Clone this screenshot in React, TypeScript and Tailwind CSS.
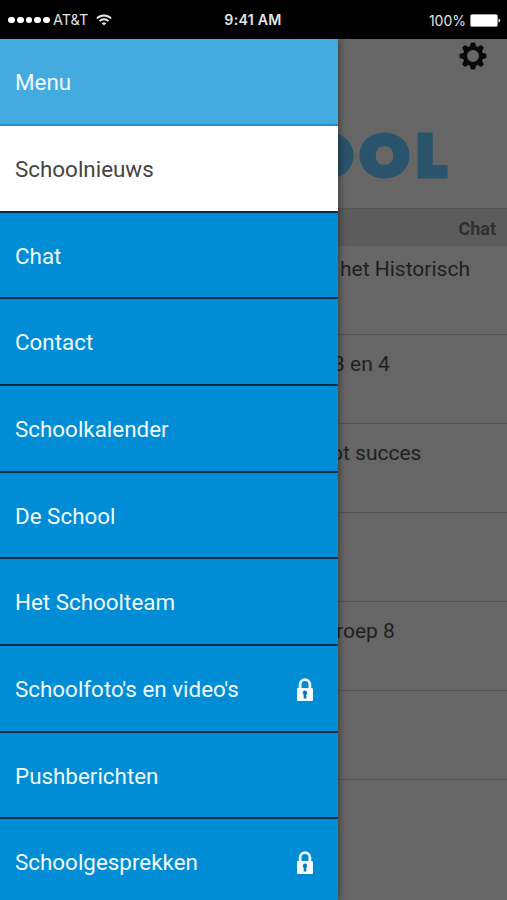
interface MenuItem {
  label: string;
  locked?: boolean;
  active?: boolean;
}

const menuItems: MenuItem[] = [
  { label: 'Schoolnieuws', active: true },
  { label: 'Chat' },
  { label: 'Contact' },
  { label: 'Schoolkalender' },
  { label: 'De School' },
  { label: 'Het Schoolteam' },
  { label: "Schoolfoto's en video's", locked: true },
  { label: 'Pushberichten' },
  { label: 'Schoolgesprekken', locked: true },
];

const newsRows = [
  { title: 'het Historisch', className: 'h-[89px] pl-[340px] pt-[7px] border-b' },
  { title: '3 en 4', className: 'h-[89px] pl-[333px] pt-[13px] border-b' },
  { title: 'ot succes', className: 'h-[89px] pl-[331px] pt-[13px] border-b' },
  { title: '', className: 'h-[89px] border-b' },
  { title: 'roep 8', className: 'h-[89px] pl-[336px] pt-[13px] border-b' },
  { title: '', className: 'h-[89px] border-b' },
  { title: '', className: 'h-[121px]' },
];

function WifiIcon() {
  return (
    <svg className="ml-[8px] h-[12px] w-[16px]" viewBox="0 0 16 12" fill="none" stroke="#e8e8e8">
      <path d="M0.9 4.4a10.2 10.2 0 0 1 14.2 0" strokeWidth="1.8" />
      <path d="M3.5 7.1a6.4 6.4 0 0 1 9 0" strokeWidth="1.8" />
      <path d="M8 11.6 5.7 9.3a3.3 3.3 0 0 1 4.6 0Z" fill="#e8e8e8" stroke="none" />
    </svg>
  );
}

function BatteryIcon() {
  return (
    <svg className="ml-[4px] h-[13px] w-[31px]" viewBox="0 0 31 13">
      <rect x="0.5" y="0.5" width="27" height="12" rx="1.5" fill="#fff" stroke="#bbb" strokeWidth="0.5" />
      <path d="M28.5 4.5q1.8 0.5 1.8 2t-1.8 2Z" fill="#ddd" />
    </svg>
  );
}

function GearIcon() {
  return (
    <svg className="h-[28px] w-[28px]" viewBox="-14 -14 28 28">
      <circle r="8" fill="none" stroke="#080808" strokeWidth="4" />
      {[0, 45, 90, 135, 180, 225, 270, 315].map((angle) => (
        <path key={angle} d="M-3.6 -8.5-2.3 -12.4q0.2-1.1 1.1-1.1h2.4q0.9 0 1.1 1.1L3.6 -8.5Z" fill="#080808" transform={`rotate(${angle})`} />
      ))}
    </svg>
  );
}

function LockIcon() {
  return (
    <svg className="h-[24px] w-[18px]" viewBox="0 0 18 24">
      <path d="M4.1 11V6.6a4.9 4.9 0 0 1 9.8 0V11" fill="none" stroke="#f6fbff" strokeWidth="2.8" />
      <rect x="1" y="10" width="16" height="13" rx="1.2" fill="#f6fbff" />
      <path d="M9 12.4a2.4 2.4 0 0 1 1.3 4.3v3.8H7.7v-3.8A2.4 2.4 0 0 1 9 12.4Z" fill="#0879b5" />
    </svg>
  );
}

function StatusBar() {
  return (
    <header className="grid h-[39px] grid-cols-[1fr_auto_1fr] items-center bg-black pt-px pr-[6px] pl-[8px] font-['Inter',sans-serif] text-[14px] text-[#e4e4e4]">
      <div className="flex items-center">
        <div className="flex gap-[2px]">
          {[0, 1, 2, 3, 4].map((dot) => (
            <span key={dot} className="size-[6.8px] rounded-full bg-white" />
          ))}
        </div>
        <span className="ml-[3px] text-[14.4px]">AT&amp;T</span>
        <WifiIcon />
      </div>
      <span className="mr-[3px] text-[14.2px] font-semibold tracking-[0.25px]">9:41 AM</span>
      <div className="flex items-center justify-end">
        <span>100%</span>
        <BatteryIcon />
      </div>
    </header>
  );
}

function NewsPage() {
  return (
    <main className="h-full overflow-hidden bg-[#666666] text-[#1f1f1f]">
      <div className="flex h-[169px] flex-col items-end">
        <div className="mt-[3px] mr-[20px]">
          <GearIcon />
        </div>
        <div className="mt-[48px] mr-[62px] flex font-['Lato',sans-serif] text-[53px] leading-[74px] font-black text-[#2a546c] [-webkit-text-stroke:7px_#2a546c]">
          <span className="mr-[13px] scale-x-108">O</span>
          <span className="mr-[11px] scale-x-108">O</span>
          <span className="origin-right">L</span>
        </div>
      </div>
      <div className="flex h-[38px] items-center justify-end border-t border-[#555] bg-[#5c5c5c] pt-[2px] pr-[11px] text-[18px] font-bold text-[#303030]">
        Chat
      </div>
      {newsRows.map((row, i) => (
        <div key={i} className={`border-[#545454] text-[21px] leading-[32px] whitespace-nowrap ${row.className}`}>
          {row.title}
        </div>
      ))}
    </main>
  );
}

function Drawer() {
  return (
    <nav className="absolute inset-y-0 left-0 w-[338px] overflow-hidden bg-[#008dd5] text-[22.4px] text-[#f0faff] shadow-[1px_0_8px_rgba(0,0,0,0.45)]">
      <div className="flex h-[87px] items-center border-b-2 border-[#2191ca] bg-[#43abe0] pt-[2px] pl-[15px]">Menu</div>
      {menuItems.map((item) => (
        <div
          key={item.label}
          className={`flex h-[86.67px] items-center justify-between border-b-2 border-[#062d49] pt-[3px] pr-[24px] pl-[15px] ${
            item.active ? 'bg-white text-[#444]' : ''
          }`}
        >
          <span>{item.label}</span>
          {item.locked && <LockIcon />}
        </div>
      ))}
    </nav>
  );
}

export default function App() {
  return (
    <div className="flex h-[900px] w-[507px] flex-col overflow-hidden font-['Roboto',sans-serif]">
      <StatusBar />
      <div className="relative min-h-0 flex-1">
        <NewsPage />
        <Drawer />
      </div>
    </div>
  );
}
